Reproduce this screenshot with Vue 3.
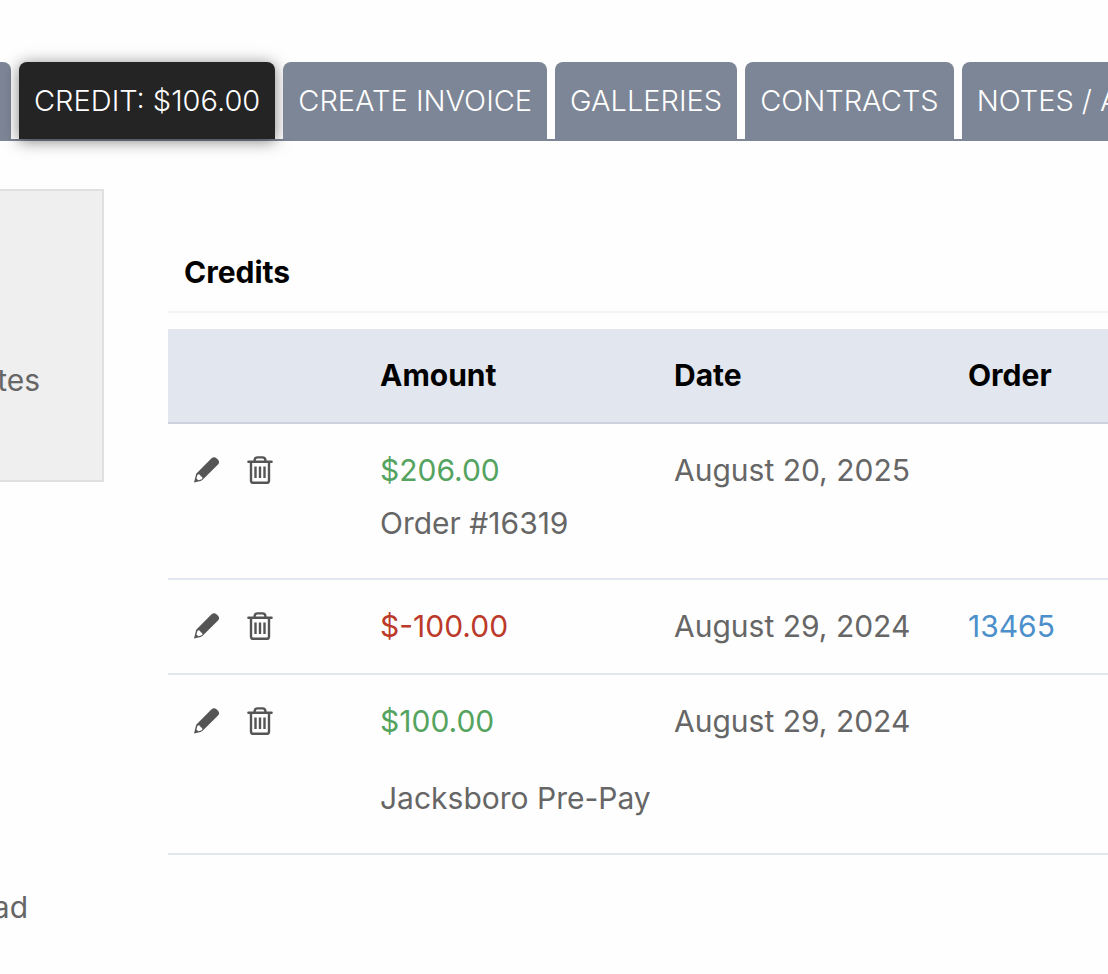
<template>
  <div class="page">
    <nav class="tabs">
      <button class="tab tab--edge" type="button" aria-label="Previous tab"></button>
      <button
        v-for="tab in tabs"
        :key="tab"
        class="tab"
        :class="{ 'tab--active': tab === activeTab }"
        type="button"
        @click="activeTab = tab"
      >
        {{ tab }}
      </button>
    </nav>

    <main class="content">
      <aside class="sidebar">
        <div class="side-card">tes</div>
        <p class="side-note">ad</p>
      </aside>

      <section class="credits">
        <h2>Credits</h2>
        <table>
          <thead>
            <tr>
              <th class="col-actions"></th>
              <th class="col-data">Amount</th>
              <th class="col-data">Date</th>
              <th>Order</th>
            </tr>
          </thead>
          <tbody>
            <tr v-for="credit in credits" :key="credit.id">
              <td>
                <div class="actions">
                  <button type="button" aria-label="Edit credit">
                    <svg viewBox="0 0 28 28" width="28" height="28">
                      <path
                        fill="currentColor"
                        fill-rule="evenodd"
                        d="M1 26.5 3.2 17.8 18.3 2.6Q20.6.4 22.9 1.7L25.3 3.9Q27 6.2 25 8.6L9.6 23.8Q8.7 24.6 7.5 24.9ZM4.4 18.9 3.4 22.6 5.3 24.3 8.9 23.2Q10 22 8.9 20.8L7.7 20.3 7.1 18.9Q5.8 17.6 4.4 18.9Z"
                      />
                    </svg>
                  </button>
                  <button type="button" aria-label="Delete credit">
                    <svg viewBox="0 0 28 28" width="28" height="28" fill="none" stroke="currentColor">
                      <path
                        stroke-width="2.4"
                        stroke-linecap="round"
                        stroke-linejoin="round"
                        d="M2.4 5.8H25.6M8.6 5.5V4Q8.9 1.4 11.2 1.4H16.8Q19.1 1.4 19.4 4V5.5M5 6V24.4Q5 26.8 7.5 26.8H20.5Q23 26.8 23 24.4V6"
                      />
                      <path stroke-width="2.4" d="M9.5 10.5V22M14 10.5V22M18.5 10.5V22" />
                    </svg>
                  </button>
                </div>
              </td>
              <td>
                <div :class="credit.negative ? 'debit' : 'credit'">{{ credit.amount }}</div>
                <p v-if="credit.note" class="note" :class="{ 'note--spaced': credit.spaced }">
                  {{ credit.note }}
                </p>
              </td>
              <td>{{ credit.date }}</td>
              <td>
                <a v-if="credit.order" href="#">{{ credit.order }}</a>
              </td>
            </tr>
          </tbody>
        </table>
      </section>
    </main>
  </div>
</template>

<script setup>
import { ref } from 'vue'

const tabs = ['CREDIT: $106.00', 'CREATE INVOICE', 'GALLERIES', 'CONTRACTS', 'NOTES / A']
const activeTab = ref('CREDIT: $106.00')

const credits = [
  { id: 1, amount: '$206.00', date: 'August 20, 2025', note: 'Order #16319' },
  { id: 2, amount: '$-100.00', date: 'August 29, 2024', order: '13465', negative: true },
  { id: 3, amount: '$100.00', date: 'August 29, 2024', note: 'Jacksboro Pre-Pay', spaced: true }
]
</script>

<style>
body {
  background: #fefefe;
}
</style>

<style scoped>
.page {
  overflow: hidden;
  padding-top: 62px;
  font-family: Inter, "Liberation Sans", sans-serif;
  font-size: 30px;
  line-height: 53px;
  color: #666;
}

.tabs {
  display: flex;
  gap: 8px;
  border-bottom: 2px solid #7d8696;
}

.tab {
  flex-shrink: 0;
  padding: 12px 15px;
  border: 0;
  border-radius: 8px 8px 0 0;
  background: #7d8696;
  color: #fff;
  font-family: inherit;
  font-size: 29px;
  font-weight: 300;
  line-height: 53px;
  white-space: nowrap;
  cursor: pointer;
}

.tab--edge {
  width: 11px;
  padding: 0;
  border-top-left-radius: 0;
}

.tab--active {
  background: #242424;
  box-shadow: 0 2px 16px rgba(0, 0, 0, 0.5);
}

.content {
  display: grid;
  grid-template-columns: 104px minmax(0, 1fr);
  gap: 64px;
  padding-top: 48px;
}

.side-card,
.side-note {
  display: flex;
  justify-content: flex-end;
}

.side-card {
  padding: 163px 62px 73px 0;
  border: 2px solid #e0e0e0;
  border-left: 0;
  background: #efefef;
}

.side-note {
  margin: 399px 76px 0 0;
}

.credits {
  padding-top: 57px;
}

h2 {
  margin: 0 0 16px;
  padding: 0 16px 12px;
  border-bottom: 2px solid #f3f3f3;
  color: #000;
  font-size: 30px;
  font-weight: 700;
}

table {
  width: 100%;
  table-layout: fixed;
  border-collapse: separate;
  border-spacing: 0;
}

th,
td {
  padding: 20px 0 20px 16px;
  border-bottom: 2px solid #e2e6ee;
  text-align: left;
  vertical-align: top;
  white-space: nowrap;
}

th {
  border-bottom-color: #cbd2dd;
  background: #e2e6ee;
  color: #000;
  font-weight: 700;
}

.col-actions {
  width: 180px;
}

.col-data {
  width: 278px;
}

.actions {
  display: flex;
  align-items: center;
  gap: 25px;
  height: 51px;
  padding-left: 9px;
}

.actions button {
  display: flex;
  padding: 0;
  border: 0;
  background: none;
  color: #555;
  cursor: pointer;
}

.credit {
  color: #54a35f;
}

.debit {
  color: #bb3a2a;
}

.note {
  margin: 0 0 8px;
}

.note--spaced {
  margin-top: 24px;
}

a {
  color: #4b8fcb;
  text-decoration: none;
}
</style>
